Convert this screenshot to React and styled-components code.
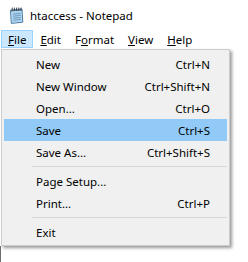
import React from 'react'
import styled, { createGlobalStyle } from 'styled-components';

const menuBar = [
  { label: 'File', key: 'F', active: true },
  { label: 'Edit', key: 'E' },
  { label: 'Format', key: 'o' },
  { label: 'View', key: 'V' },
  { label: 'Help', key: 'H' },
];

const fileMenu = [
  { label: 'New', shortcut: 'Ctrl+N' },
  { label: 'New Window', shortcut: 'Ctrl+Shift+N' },
  { label: 'Open...', shortcut: 'Ctrl+O' },
  { label: 'Save', shortcut: 'Ctrl+S', hover: true },
  { label: 'Save As...', shortcut: 'Ctrl+Shift+S' },
  { sep: true },
  { label: 'Page Setup...' },
  { label: 'Print...', shortcut: 'Ctrl+P' },
  { sep: true },
  { label: 'Exit' },
];

const withMnemonic = (label, key) => {
  const i = label.indexOf(key);
  if (i < 0) return label;
  return (
    <>
      {label.slice(0, i)}
      <Mnemonic>{label[i]}</Mnemonic>
      {label.slice(i + 1)}
    </>
  );
};

const NotepadIcon = () => (
  <svg width="17" height="17" viewBox="0 0 17 17">
    <path d="M2.5 3.5 L14 2.3 L14.8 15.2 L3.3 16.4 Z" fill="#bfe0f5" stroke="#4a7aa3" strokeWidth="1" />
    <path d="M3.2 4.2 L13.4 3.1 L14 14.6 L3.9 15.6 Z" fill="#9ccbea" opacity="0.55" />
    <path d="M5 7.2 L12.6 6.4 M5.1 9.2 L12.7 8.4 M5.2 11.2 L12.8 10.4 M5.3 13.2 L12.9 12.4" stroke="#5f8bb0" strokeWidth="0.8" />
    <path d="M2.3 2.7 L14 1.5 L14.1 3.3 L2.4 4.5 Z" fill="#5d7488" />
    {[4.2, 6.4, 8.6, 10.8, 13].map((x, i) => (
      <path key={i} d={`M${x} 0.6 L${x} 3.8`} stroke="#34434f" strokeWidth="1" />
    ))}
  </svg>
);

const App = () => {
  return (
    <>
      <GlobalStyle />
      <Window>
        <TitleBar>
          <NotepadIcon />
          <Title>htaccess - Notepad</Title>
        </TitleBar>

        <MenuBar>
          {menuBar.map(item => (
            <MenuBarItem key={item.label} $active={item.active}>
              {withMnemonic(item.label, item.key)}
            </MenuBarItem>
          ))}
        </MenuBar>

        <EditArea />

        <Dropdown>
          {fileMenu.map((item, i) =>
            item.sep ? (
              <Separator key={i} />
            ) : (
              <MenuItem key={i} $hover={item.hover}>
                <span>{item.label}</span>
                <Shortcut>{item.shortcut}</Shortcut>
              </MenuItem>
            )
          )}
        </Dropdown>
      </Window>
    </>
  )
}

export default App;


/* ===========================
   Styled Components
=========================== */

const GlobalStyle = createGlobalStyle`
  html, body {
    margin: 0;
    padding: 0;
    background: #fff;
  }
  body {
    font-family: "Segoe UI", "Noto Sans", sans-serif;
    font-size: 11.5px;
    color: #000;
  }
`;

const Window = styled.div`
  position: relative;
  width: 248px;
  height: 262px;
  overflow: hidden;
  background: #fff;
  display: flex;
  flex-direction: column;
`;

const TitleBar = styled.div`
  height: 30px;
  display: flex;
  align-items: center;
  gap: 5px;
  padding-left: 8px;
  flex-shrink: 0;
`;

const Title = styled.div`
  font-size: 11.5px;
  line-height: 1;
  padding-top: 1px;
`;

const MenuBar = styled.div`
  height: 19px;
  display: flex;
  padding-left: 1px;
  flex-shrink: 0;
`;

const MenuBarItem = styled.div`
  height: 18px;
  box-sizing: border-box;
  padding: 0 6px;
  display: flex;
  align-items: center;
  border: 1px solid ${p => (p.$active ? '#99d1ff' : 'transparent')};
  background: ${p => (p.$active ? '#cce8ff' : 'transparent')};
`;

const Mnemonic = styled.span`
  text-decoration: underline;
  text-underline-offset: 1px;
`;

const EditArea = styled.div`
  flex: 1;
  border-left: 1px solid #6d6d6d;
`;

const Dropdown = styled.div`
  position: absolute;
  left: 1px;
  top: 49px;
  width: 229px;
  box-sizing: border-box;
  padding: 3px 2px 2px;
  background: #f0f0f0;
  border: 1px solid #cccccc;
  box-shadow: -1px 0 0 #fff, 2px 2px 3px rgba(0, 0, 0, 0.4);
`;

const MenuItem = styled.div`
  height: 22px;
  display: flex;
  align-items: center;
  justify-content: space-between;
  padding: 0 17px 0 32px;
  background: ${p => (p.$hover ? '#91c9f7' : 'transparent')};
`;

const Shortcut = styled.span`
  white-space: nowrap;
`;

const Separator = styled.div`
  height: 7px;
  display: flex;
  align-items: center;
  padding-left: 28px;

  &::after {
    content: '';
    flex: 1;
    height: 1px;
    background: #d7d7d7;
  }
`;
